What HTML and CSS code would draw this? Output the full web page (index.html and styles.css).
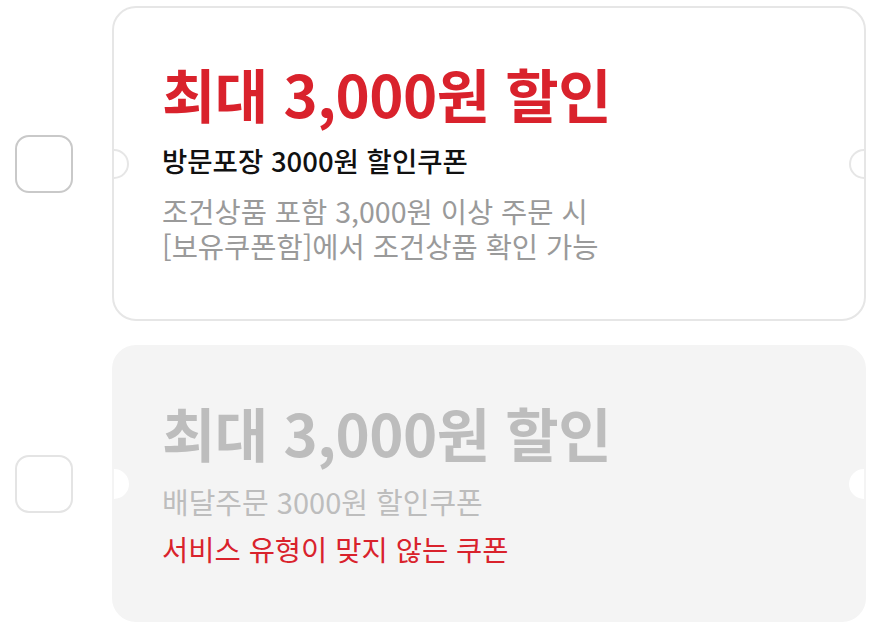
FILE: index.html
```html
<!DOCTYPE html>
<html lang="ko">
<head>
    <meta charset="UTF-8">
    <meta name="viewport" content="width=device-width, initial-scale=1.0">
    <title>쿠폰 선택</title>
    <link rel="stylesheet" href="styles.css">
</head>
<body>
    <ul class="coupon-list">
        <!-- 사용 가능한 쿠폰 -->
        <li class="coupon-row">
            <span class="check"></span>
            <div class="coupon">
                <p class="coupon-title">최대 3,000원 할인</p>
                <p class="coupon-name">방문포장 3000원 할인쿠폰</p>
                <p class="coupon-desc">조건상품 포함 3,000원 이상 주문 시</p>
                <p class="coupon-desc">[보유쿠폰함]에서 조건상품 확인 가능</p>
            </div>
        </li>
        <!-- 사용 불가 쿠폰 -->
        <li class="coupon-row disabled">
            <span class="check"></span>
            <div class="coupon">
                <p class="coupon-title">최대 3,000원 할인</p>
                <p class="coupon-name">배달주문 3000원 할인쿠폰</p>
                <p class="coupon-warn">서비스 유형이 맞지 않는 쿠폰</p>
            </div>
        </li>
    </ul>
</body>
</html>
```
FILE: styles.css
```css
body {
    margin: 0;
    background: #fff;
    font-family: "Noto Sans CJK KR", "Noto Sans", sans-serif;
}
p {
    margin: 0;
}
.coupon-list {
    list-style: none;
    margin: 0;
    padding: 6px 12px 0 15px;
    display: flex;
    flex-direction: column;
    gap: 24px;
}
.coupon-row {
    display: flex;
    align-items: center;
    gap: 39px;
}
.check {
    flex: none;
    width: 54px;
    height: 54px;
    border: 2px solid #c9c9c9;
    border-radius: 14px;
}
.coupon {
    position: relative;
    flex: 1;
    padding: 49px 48px 56px;
    border: 2px solid #e6e6e6;
    border-radius: 24px;
    background: #fff;
}

/* 티켓 모양 홈 */
.coupon::before,
.coupon::after {
    content: "";
    position: absolute;
    top: 50%;
    width: 26px;
    height: 26px;
    margin-top: -15px;
    border: 2px solid #e6e6e6;
    border-radius: 50%;
    background: #fff;
}
.coupon::before {
    left: -15px;
    clip-path: inset(-2px -2px -2px 15px);
}
.coupon::after {
    right: -15px;
    clip-path: inset(-2px 15px -2px -2px);
}

.coupon-title {
    font-size: 58px;
    font-weight: 700;
    line-height: 72px;
    letter-spacing: -0.5px;
    color: #d9222c;
}
.coupon-name {
    margin-top: 11px;
    font-size: 27.5px;
    font-weight: 500;
    line-height: 40px;
    color: #111;
}
.coupon-desc {
    margin-top: 13px;
    font-size: 28.5px;
    line-height: 35px;
    color: #9a9a9a;
}
.coupon-desc + .coupon-desc {
    margin-top: 0;
}
.coupon-warn {
    margin-top: 10px;
    font-size: 28.5px;
    line-height: 35px;
    color: #d9222c;
}

.disabled .check {
    border-color: #e4e4e4;
}
.disabled .coupon {
    padding-bottom: 54px;
    border-color: #f4f4f4;
    background: #f4f4f4;
}
.disabled .coupon::before,
.disabled .coupon::after {
    border-color: #fff;
}
.disabled .coupon-title,
.disabled .coupon-name {
    color: #bdbdbd;
}
.disabled .coupon-name {
    margin-top: 13px;
    font-size: 29px;
    font-weight: 400;
}
```
